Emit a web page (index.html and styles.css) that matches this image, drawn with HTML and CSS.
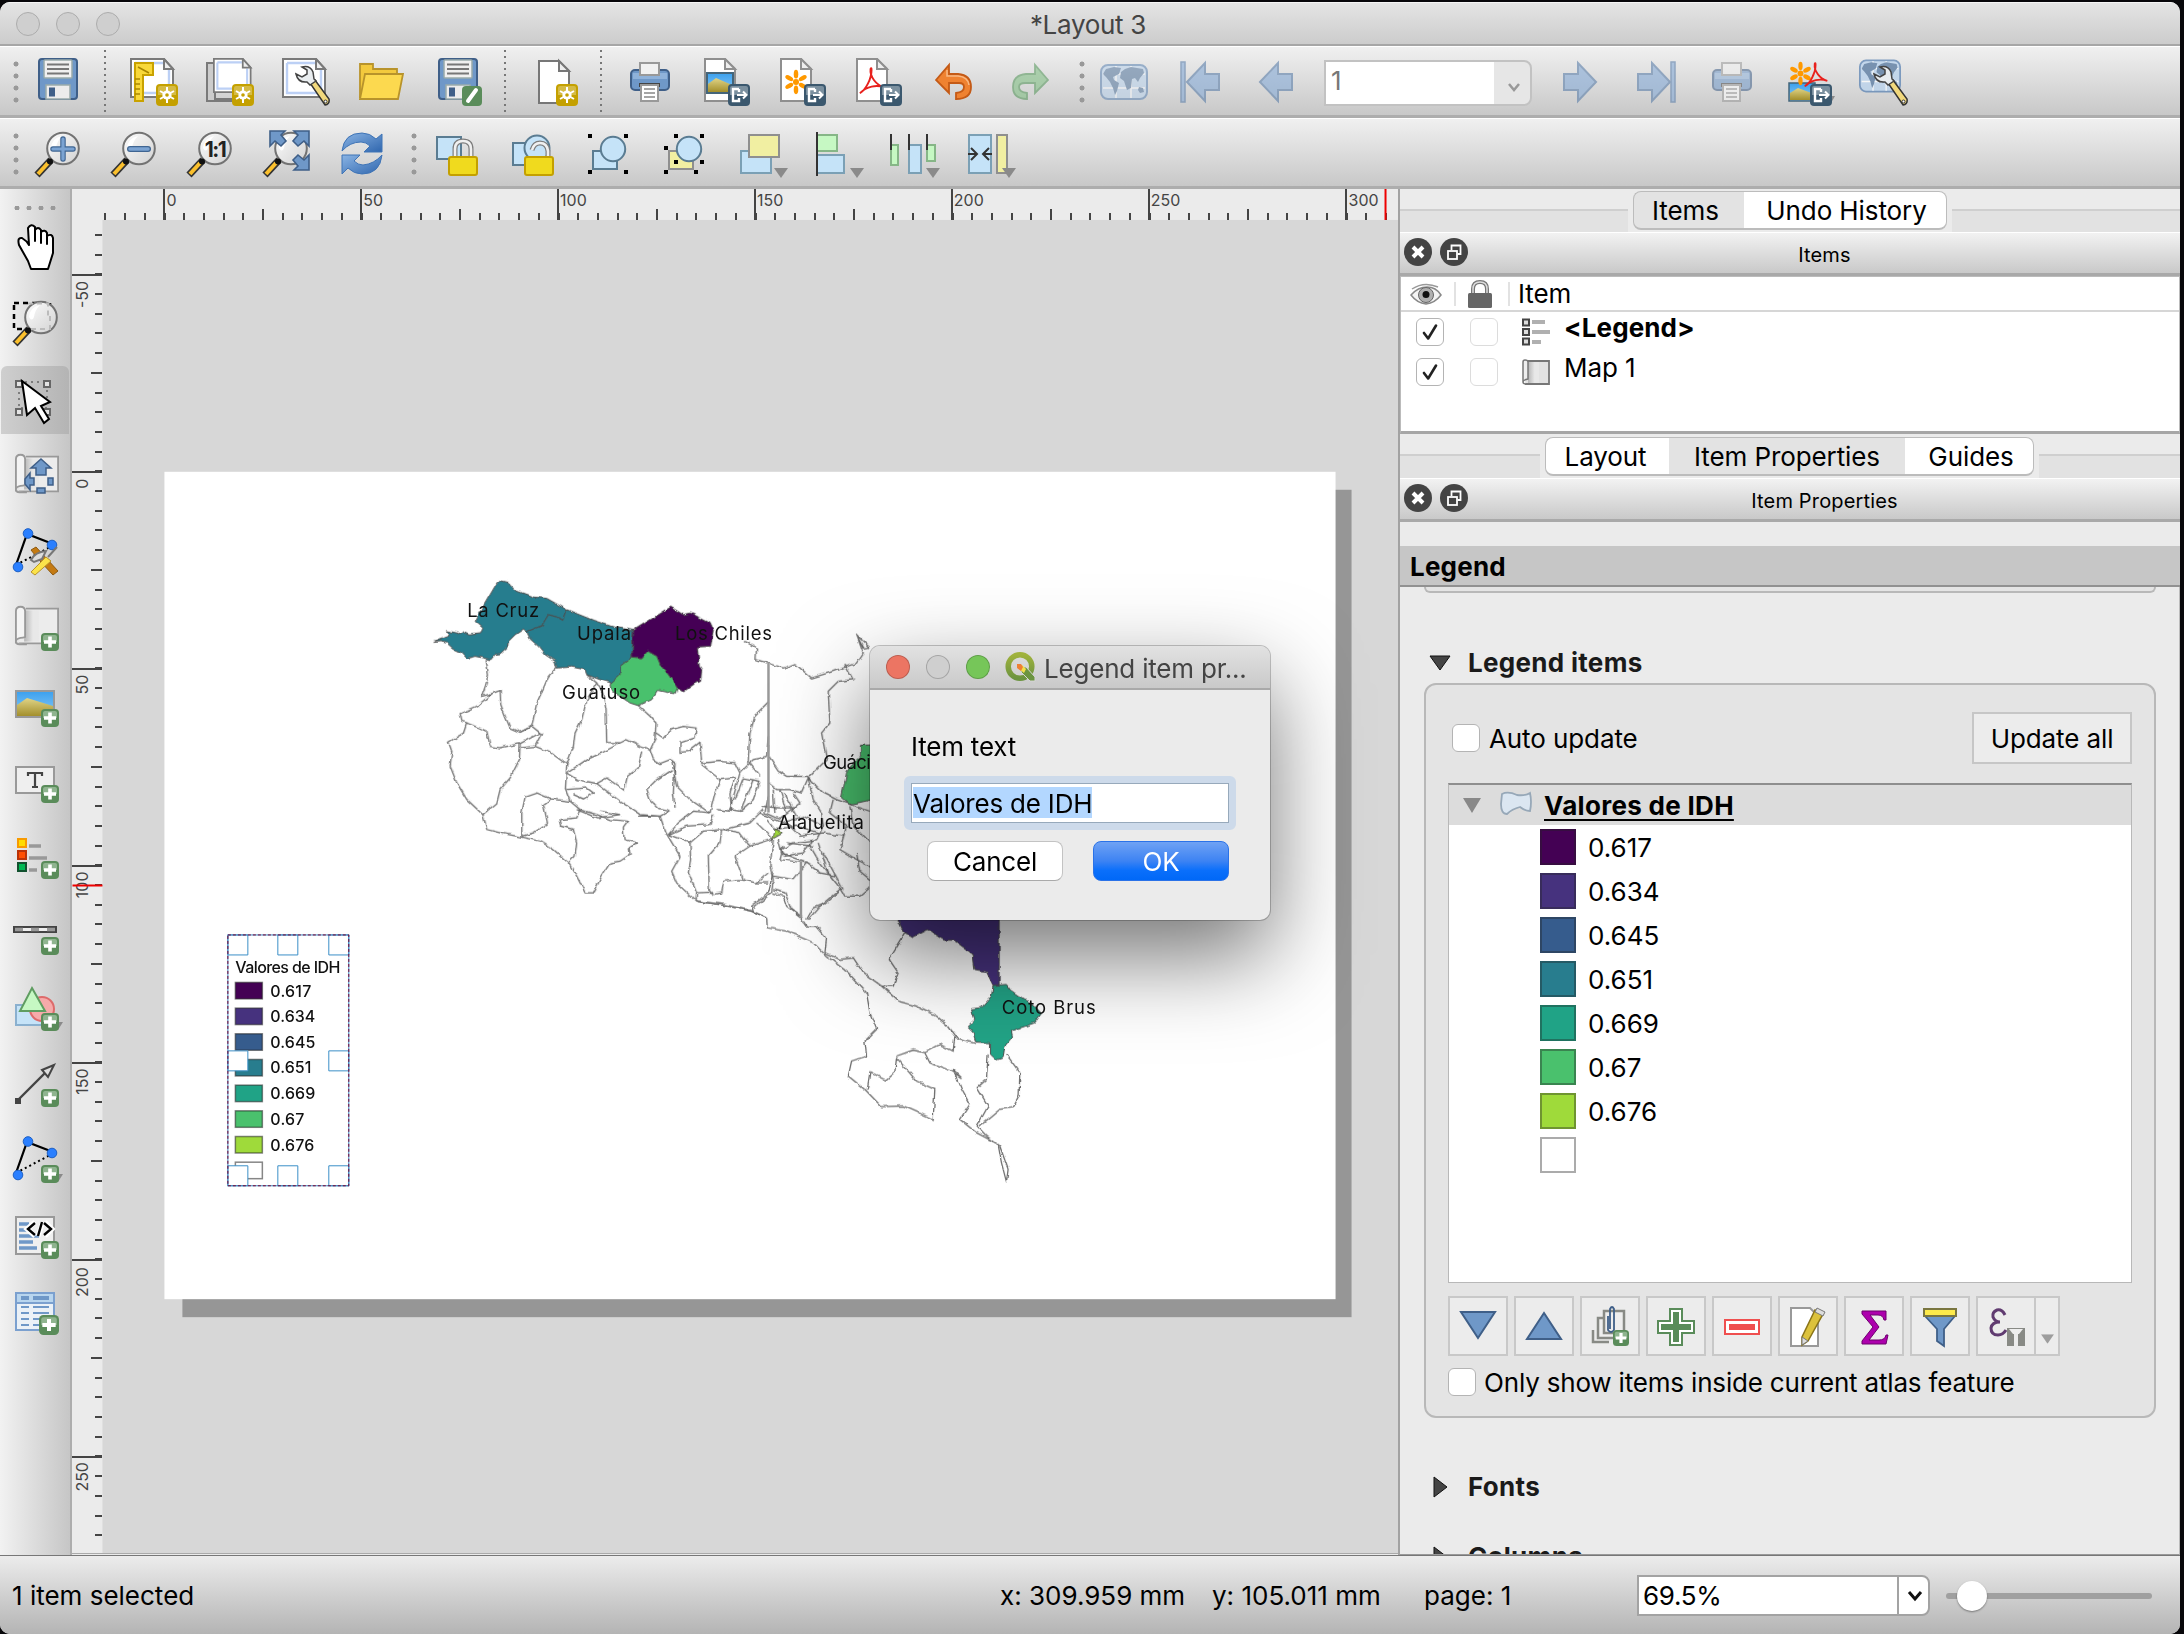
FILE: index.html
```html
<!DOCTYPE html>
<html lang="en">
<head>
<meta charset="utf-8">
<title>*Layout 3</title>
<link rel="stylesheet" href="styles.css">
</head>
<body>
<svg class="defs" width="0" height="0" aria-hidden="true">
  <defs>
    <linearGradient id="sky" x1="0" y1="0" x2="0" y2="1"><stop offset="0" stop-color="#3aa0ee"/><stop offset="1" stop-color="#8fcbf6"/></linearGradient>
    <linearGradient id="sand" x1="0" y1="0" x2="0" y2="1"><stop offset="0" stop-color="#e0d487"/><stop offset="1" stop-color="#a38f2c"/></linearGradient>
    <linearGradient id="roll" x1="0" y1="0" x2="1" y2="0"><stop offset="0" stop-color="#b5b5b5"/><stop offset=".6" stop-color="#e8e8e8"/></linearGradient>
    <linearGradient id="lens" x1="0" y1="0" x2="1" y2="1"><stop offset="0" stop-color="#fdfdfd"/><stop offset="1" stop-color="#d2d2d2"/></linearGradient>
    <linearGradient id="qg" x1="0" y1="0" x2="0" y2="1"><stop offset="0" stop-color="#a0b23c"/><stop offset="1" stop-color="#6c9440"/></linearGradient>
    <linearGradient id="blueArrow" x1="0" y1="0" x2="1" y2="1"><stop offset="0" stop-color="#8ab4e4"/><stop offset="1" stop-color="#2f66ae"/></linearGradient>
  </defs>
  <symbol id="b-plus" viewBox="0 0 18 18"><rect width="18" height="18" rx="4" fill="#5a8c5a"/><path d="M2 4q0-2 2-2h10q2 0 2 2v5H2z" fill="#8fb48f"/><path d="M9 3.500v11M3 9h12" stroke="#fff" stroke-width="3.600"/></symbol>
  <symbol id="b-star" viewBox="0 0 22 22"><rect width="22" height="22" rx="4" fill="#c4a000"/><path d="M2 4q0-2 2-2h14q2 0 2 2v7H2z" fill="#d5bb45"/><path d="M11 3v16M4 7l14 8M18 7L4 15" stroke="#fff" stroke-width="2"/><circle cx="11" cy="11" r="4.600" fill="#fff"/><circle cx="11" cy="11" r="1.800" fill="#c4a000"/></symbol>
  <symbol id="b-export" viewBox="0 0 22 22"><rect width="22" height="22" rx="4" fill="#3b586e"/><path d="M2 4q0-2 2-2h14q2 0 2 2v7H2z" fill="#7b909f"/><path d="M11 5H5v12h6v-3M11 5v3" fill="none" stroke="#fff" stroke-width="2.400"/><path d="M9 11h9M15 7.500l3.500 3.500-3.500 3.500" fill="none" stroke="#fff" stroke-width="2"/></symbol>
  <symbol id="floppy" viewBox="0 0 48 48"><rect x="5" y="1" width="38" height="40" rx="3" fill="#6f98c8" stroke="#3f5f88" stroke-width="2"/><rect x="10" y="2" width="28" height="18" rx="1" fill="#f0f0f0" stroke="#9aa" stroke-width="1.500"/><path d="M13 6.500h22M13 11h22M13 15.500h22" stroke="#777" stroke-width="1.800"/><rect x="12" y="27" width="24" height="14" fill="#ececec" stroke="#9aa" stroke-width="1.500"/><rect x="15" y="29.500" width="6" height="9" fill="#3f5f88"/></symbol>
  <symbol id="sheet" viewBox="0 0 48 48"><path d="M1 1h33l9 10v28H1z" fill="#fff" stroke="#7a7a7a" stroke-width="2"/><path d="M5 5h28M5 5v30h34V12" fill="none" stroke="#bcd0f5" stroke-width="2.400"/><path d="M34 1v10h9z" fill="#eee" stroke="#7a7a7a" stroke-width="2"/></symbol>
  <symbol id="page" viewBox="0 0 48 48"><path d="M3 1h20l10 10v32H3z" fill="#fff" stroke="#8f8f8f" stroke-width="2"/><path d="M23 1v10h10z" fill="#eee" stroke="#8f8f8f" stroke-width="2"/></symbol>
  <symbol id="wrench" viewBox="0 0 48 48"><path d="M28 25l5-3 14 19q1 5-4 6z" fill="#f1d87c" stroke="#333" stroke-width="1.500"/><circle cx="43.500" cy="43.500" r="1.500" fill="#fff" stroke="#333"/><path d="M20 9q8-2 11 5l1 7 2 2-6 4-3-3q-9 1-11-8l6 3 5-3v-4z" fill="#e9edf0" stroke="#444" stroke-width="1.500"/></symbol>
  <symbol id="printer" viewBox="0 0 48 48"><rect x="5" y="12" width="38" height="20" rx="4" fill="#6f98c8" stroke="#3f5f88" stroke-width="2"/><path d="M7 15h34v6H7z" fill="#8fb2da"/><rect x="14" y="5" width="19" height="12" fill="#f1f1f1" stroke="#999" stroke-width="2"/><path d="M13 25h21v4H13z" fill="#444"/><rect x="15" y="27" width="17" height="16" fill="#fff" stroke="#999" stroke-width="2"/><path d="M18 31h11M18 35h11M18 39h11" stroke="#888" stroke-width="1.600"/></symbol>
  <symbol id="pdf" viewBox="0 0 30 30"><path d="M2 27C8 24 14 12 14 3q0-3-1-1c-1 8 6 17 14 19-8-3-18-1-25 6z" fill="none" stroke="#e8211d" stroke-width="2"/></symbol>
  <symbol id="flower" viewBox="0 0 30 30"><g fill="#f90"><circle cx="15" cy="15" r="3.500"/><g id="pt"><ellipse cx="15" cy="6" rx="2.600" ry="5"/><ellipse cx="15" cy="24" rx="2.600" ry="5"/></g><use href="#pt" transform="rotate(60 15 15)"/><use href="#pt" transform="rotate(120 15 15)"/></g></symbol>
  <symbol id="globe" viewBox="0 0 48 48" preserveAspectRatio="none"><rect x="1" y="7" width="46" height="34" rx="7" fill="#b9d3ee" stroke="#5b83b3" stroke-width="2"/><path d="M3 16h42M3 30h42M16 8v32M31 8v32" stroke="#fff" stroke-width="1.500"/><path d="M6 11l8-2 7 1-2 6-6 3 1 3 5 3-2 8-2 4-2-7-3-6-4-5-3-3zM25 11l6-2 12 2 1 4-4 5-2 4-3-4-3 1-1 9-4 2-3-9-4-3 1-6zM39 29l4 1 1 4-4 1-2-3z" fill="#54779f"/></symbol>
  <symbol id="mag" viewBox="0 0 48 48"><path d="M17 30L3 45" stroke="#333" stroke-width="7"/><path d="M14 33L4 44" stroke="#fbc02d" stroke-width="4"/><circle cx="29" cy="18.500" r="15.800" fill="url(#lens)" stroke="#737373" stroke-width="2"/><path d="M17 18q1-10 11-12-5 5-6 12-2 5-5 0z" fill="#fff"/><circle cx="16" cy="31.500" r="3" fill="#111"/></symbol>
  <symbol id="arrowL" viewBox="0 0 48 48"><path d="M8 24L26 5v11h14v16H26v11z" fill="#7ea6d6" stroke="#4f76a5" stroke-width="2"/></symbol>
  <symbol id="maproll" viewBox="0 0 48 48"><path d="M12 5h35v38H4" fill="#ececec" stroke="#999" stroke-width="2"/><rect x="10" y="7" width="16" height="34" fill="url(#roll)"/><path d="M1 43V8q0-5 5-5 5 0 5 5v28q-2 1-5 1-5 1-5 4 0 3 4 3h8" fill="#f4f4f4" stroke="#999" stroke-width="2"/></symbol>
  <symbol id="nodes" viewBox="0 0 48 48"><path d="M5 38L16 7l26 10" fill="none" stroke="#000" stroke-width="2.200"/><path d="M5 38l38-20" stroke="#000" stroke-width="2" stroke-dasharray="2 3"/><g fill="#2a7fff" stroke="#1c5fc4"><circle cx="17" cy="6.500" r="4.800"/><circle cx="41" cy="18" r="4.800"/><circle cx="7" cy="40" r="4.800"/></g></symbol>
  <symbol id="dropdown" viewBox="0 0 14 10"><path d="M0 0h14L7 10z" fill="#8a8a8a"/></symbol>
  <symbol id="check" viewBox="0 0 28 28"><path d="M7.500 15l4.500 6L20.500 7" fill="none" stroke="#222" stroke-width="2.800" stroke-linecap="round" stroke-linejoin="round"/></symbol>
  <symbol id="dockclose" viewBox="0 0 28 28"><circle cx="14" cy="14" r="14" fill="#444"/><path d="M9 9l10 10M19 9L9 19" stroke="#fff" stroke-width="4"/></symbol>
  <symbol id="dockfloat" viewBox="0 0 28 28"><circle cx="14" cy="14" r="14" fill="#444"/><rect x="8" y="13" width="9" height="8" fill="none" stroke="#fff" stroke-width="1.800"/><path d="M11.500 12V7.500h9V16h-3" fill="none" stroke="#fff" stroke-width="1.800"/></symbol>
</svg>

<div class="window">
  <header class="titlebar">
    <div class="lights"><i></i><i></i><i></i></div>
    <h1>*Layout 3</h1>
  </header>

  <div class="toolbar first">
    <span class="grip"></span>
    <svg class="tool" viewBox="0 0 48 48"><use href="#floppy"/></svg>
    <span class="sep"></span>
    <svg class="tool" viewBox="0 0 48 48"><use href="#sheet"/><path d="M5 5h18v12H13v26H5z" fill="#f8d83a" stroke="#c9a200" stroke-width="2"/><path d="M8 9l11 6M5 21h5M5 26h5M5 31h5M5 36h5" stroke="#a98700" stroke-width="1.500"/><use href="#b-star" x="26" y="26" width="22" height="22"/></svg>
    <svg class="tool" viewBox="0 0 48 48"><path d="M1 5h8v36h26v2H1z" fill="#ccc" stroke="#7a7a7a" stroke-width="2"/><use href="#sheet" x="7" width="42" height="42"/><use href="#b-star" x="26" y="26" width="22" height="22"/></svg>
    <svg class="tool" viewBox="0 0 48 48"><use href="#sheet"/><use href="#wrench"/></svg>
    <svg class="tool" viewBox="0 0 48 48"><path d="M2 40V6h13v5h24v9" fill="#f3c93d" stroke="#b8932b" stroke-width="1.800"/><path d="M2 41L7 16h38l-5 25z" fill="#fcd94f" stroke="#b8932b" stroke-width="1.800"/></svg>
    <svg class="tool" viewBox="0 0 48 48"><use href="#floppy"/><rect x="28" y="28" width="20" height="20" rx="4" fill="#5a8c5a"/><path d="M34 43l8-11" stroke="#fff" stroke-width="4" stroke-linecap="round"/></svg>
    <span class="sep"></span>
    <svg class="tool" viewBox="0 0 48 48"><path d="M9 3h20l10 10v32H9z" fill="#fff" stroke="#777" stroke-width="2"/><path d="M29 3v10h10z" fill="#eee" stroke="#777" stroke-width="2"/><use href="#b-star" x="26" y="26" width="22" height="22"/></svg>
    <span class="sep"></span>
    <svg class="tool" viewBox="0 0 48 48"><use href="#printer"/></svg>
    <svg class="tool" viewBox="0 0 48 48"><use href="#page"/><rect x="5" y="15" width="26" height="20" fill="url(#sky)" stroke="#44657a" stroke-width="2"/><path d="M6 26l8-6 16 7v7H6z" fill="url(#sand)"/><use href="#b-export" x="26" y="26" width="22" height="22"/></svg>
    <svg class="tool" viewBox="0 0 48 48"><use href="#page"/><use href="#flower" x="5" y="11" width="26" height="26"/><use href="#b-export" x="26" y="26" width="22" height="22"/></svg>
    <svg class="tool" viewBox="0 0 48 48"><use href="#page"/><use href="#pdf" x="4" y="9" width="29" height="29"/><use href="#b-export" x="26" y="26" width="22" height="22"/></svg>
    <svg class="tool" viewBox="0 0 48 48"><path d="M6 22L19 7v9h9q13 1 13 13 0 12-15 12v-6q8-1 8-6 0-4-5-4H19v10z" fill="#ef8231" stroke="#c45a16" stroke-width="1.800"/><path d="M17 12v6h11q10 1 11 9" fill="none" stroke="#f8b884" stroke-width="1.500"/></svg>
    <svg class="tool faded" viewBox="0 0 48 48"><path d="M42 22L29 7v9h-9Q7 17 7 29q0 12 14 12v-6q-8-1-8-6 0-4 6-4h10v10z" fill="#7dbf80" stroke="#4f9455" stroke-width="1.800"/></svg>
    <span class="grip mid"></span>
    <svg class="tool faded" viewBox="0 0 48 48"><use href="#globe"/></svg>
    <svg class="tool faded" viewBox="0 0 48 48"><path d="M5 4h4v40H5z" fill="#7ea6d6" stroke="#4f76a5" stroke-width="1.500"/><path d="M11 24L29 5v11h14v16H29v11z" fill="#7ea6d6" stroke="#4f76a5" stroke-width="2"/></svg>
    <svg class="tool faded" viewBox="0 0 48 48"><use href="#arrowL"/></svg>
    <div class="pagecombo"><span>1</span><b><svg viewBox="0 0 16 12"><path d="M3 2l5 6 5-6" fill="none" stroke="#999" stroke-width="2.500"/></svg></b></div>
    <svg class="tool faded" viewBox="0 0 48 48"><use href="#arrowL" transform="matrix(-1 0 0 1 48 0)"/></svg>
    <svg class="tool faded" viewBox="0 0 48 48"><path d="M39 4h4v40h-4z" fill="#7ea6d6" stroke="#4f76a5" stroke-width="1.500"/><path d="M38 24L20 5v11H6v16h14v11z" fill="#7ea6d6" stroke="#4f76a5" stroke-width="2"/></svg>
    <svg class="tool faded" viewBox="0 0 48 48"><use href="#printer"/></svg>
    <svg class="tool" viewBox="0 0 48 48"><rect x="5" y="25" width="26" height="18" fill="url(#sky)" stroke="#44657a" stroke-width="1.500"/><path d="M6 35l8-5 16 6v6H6z" fill="url(#sand)"/><use href="#flower" x="4" y="3" width="25" height="25"/><use href="#pdf" x="19" y="4" width="27" height="27"/><path d="M44 38h7l-4 7z" fill="#8a8a8a"/><use href="#b-export" x="26" y="26" width="22" height="22"/></svg>
    <svg class="tool" viewBox="0 0 48 48"><g opacity=".75"><use href="#globe" x="-1" y="-4" width="42" height="44"/></g><use href="#wrench"/></svg>
  </div>

  <div class="toolbar second">
    <span class="grip"></span>
    <svg class="tool" viewBox="0 0 48 48"><use href="#mag"/><path d="M29 9v20M19 19h20" stroke="#3f6592" stroke-width="5.500" stroke-linecap="round"/><path d="M29 9v20M19 19h20" stroke="#7ba3d2" stroke-width="3.200" stroke-linecap="round"/></svg>
    <svg class="tool" viewBox="0 0 48 48"><use href="#mag"/><path d="M20 19h18" stroke="#3f6592" stroke-width="6" stroke-linecap="round"/><path d="M20 19h18" stroke="#7ba3d2" stroke-width="3.500" stroke-linecap="round"/></svg>
    <svg class="tool" viewBox="0 0 48 48"><use href="#mag"/><text x="29" y="26.500" class="one" text-anchor="middle">1:1</text></svg>
    <svg class="tool" viewBox="0 0 48 48"><use href="#mag"/><g fill="#6f98c8" stroke="#3f5f88" stroke-width="1.600"><path d="M8 1h15l-4 4 5 6-5 5-6-5-5 5z"/><path d="M47 1H32l4 4-5 6 5 5 6-5 5 5z"/><path d="M47 40H32l4-4-5-6 5-5 6 5 5-5z"/></g></svg>
    <svg class="tool" viewBox="0 0 48 48"><path d="M4 21Q6 3 24 3q8 0 14 6l6-5v18H26l6-6q-4-4-9-4Q12 12 4 21z" fill="url(#blueArrow)" stroke="#3f74b6"/><path d="M44 25q-2 19-20 19-8 0-14-6l-6 6V25h18l-6 6q4 4 9 4 11-1 19-10z" fill="url(#blueArrow)" stroke="#3f74b6"/></svg>
    <span class="grip mid"></span>
    <svg class="tool" viewBox="0 0 48 48"><rect x="5" y="7" width="24" height="22" fill="#c5e3f8" stroke="#5a7c92" stroke-width="2"/><path d="M23 27V19q0-8 8-8t8 8v8" fill="none" stroke="#7d7d7d" stroke-width="5"/><path d="M23 27V19q0-8 8-8t8 8v8" fill="none" stroke="#f0f0f0" stroke-width="2.600"/><rect x="17" y="27" width="28" height="18" rx="2" fill="#f0da1e" stroke="#c4a000" stroke-width="2"/></svg>
    <svg class="tool" viewBox="0 0 48 48"><rect x="5" y="13" width="20" height="22" fill="#c5e3f8" stroke="#5a7c92" stroke-width="2"/><circle cx="29" cy="18" r="12.500" fill="#c5e3f8" stroke="#5a7c92" stroke-width="2"/><path d="M24 20q2-7 8-7 7 0 8 8v6" fill="none" stroke="#7d7d7d" stroke-width="5"/><path d="M24 20q2-7 8-7 7 0 8 8v6" fill="none" stroke="#f0f0f0" stroke-width="2.600"/><rect x="17" y="27" width="28" height="18" rx="2" fill="#f0da1e" stroke="#c4a000" stroke-width="2"/></svg>
    <svg class="tool" viewBox="0 0 48 48"><rect x="9" y="21" width="24" height="18" fill="#c5e3f8" stroke="#5a7c92" stroke-width="2"/><circle cx="29" cy="19" r="12.200" fill="#c5e3f8" stroke="#5a7c92" stroke-width="2"/><path d="M4 4h4v4H4zM40 4h4v4h-4zM4 40h4v4H4zM40 40h4v4h-4z"/></svg>
    <svg class="tool" viewBox="0 0 48 48"><rect x="9" y="21" width="24" height="18" fill="#f1efa2" stroke="#8f8f8f" stroke-width="2"/><circle cx="29" cy="19" r="12.200" fill="#c5e3f8" stroke="#5a7c92" stroke-width="2"/><path d="M14 4h4v4h-4zM40 4h4v4h-4zM4 16h4v4H4zM14 30h4v4h-4zM40 30h4v4h-4zM4 40h4v4H4zM34 40h4v4h-4z"/></svg>
    <svg class="tool" viewBox="0 0 48 48"><rect x="5" y="21" width="30" height="22" fill="#c5e3f8" stroke="#7ba0b5" stroke-width="2"/><rect x="13" y="5" width="30" height="22" fill="#f1efa2" stroke="#8f8f8f" stroke-width="2"/><use href="#dropdown" x="38" y="38" width="14" height="10"/></svg>
    <svg class="tool" viewBox="0 0 48 48"><rect x="5" y="5" width="20" height="16" fill="#c6f8c3" stroke="#86b687" stroke-width="2"/><rect x="5" y="25" width="27" height="18" fill="#c5e3f8" stroke="#7ba0b5" stroke-width="2"/><path d="M5 2v44" stroke="#333" stroke-width="2"/><use href="#dropdown" x="38" y="38" width="14" height="10"/></svg>
    <svg class="tool" viewBox="0 0 48 48"><g stroke-width="2"><rect x="3" y="15" width="7" height="20" fill="#c6f8c3" stroke="#86b687"/><rect x="21" y="15" width="12" height="28" fill="#c5e3f8" stroke="#7ba0b5"/><rect x="39" y="15" width="8" height="16" fill="#c6f8c3" stroke="#86b687"/><path d="M3 4v16M21 4v16M39 4v16" stroke="#333"/></g><use href="#dropdown" x="38" y="38" width="14" height="10"/></svg>
    <svg class="tool" viewBox="0 0 48 48"><rect x="5" y="5" width="22" height="38" fill="#c5e3f8" stroke="#7ba0b5" stroke-width="2"/><rect x="33" y="5" width="10" height="38" fill="#f1efa2" stroke="#8f8f8f" stroke-width="2"/><path d="M4 24h8M7 18l6 6-6 6M28 24h-8M25 18l-6 6 6 6" fill="none" stroke="#333" stroke-width="2"/><use href="#dropdown" x="38" y="38" width="14" height="10"/></svg>
  </div>

  <main class="main">
    <nav class="toolbox">
      <span class="hgrip"></span>
      <svg class="tool" viewBox="0 0 48 48"><path d="M20 46l-3-8-9-16q-2-8 3-7 5 3 7 7L17 5q3-5 7-1v14V7q3-4 6 0v13V9q4-3 6 1v11-8q5-3 6 2v15l-5 16z" fill="#fff" stroke="#000" stroke-width="2" stroke-linejoin="round"/></svg>
      <svg class="tool" viewBox="0 0 48 48"><rect x="3" y="4" width="36" height="26" fill="none" stroke="#000" stroke-width="2.500" stroke-dasharray="5 4"/><use href="#mag" x="1"/><path d="M17 4.500h20v12M39 17v13H20" fill="none" stroke="#bbb" stroke-width="2" stroke-dasharray="5 4"/></svg>
      <span class="active"><svg class="tool" viewBox="0 0 48 48"><rect x="8" y="7" width="28" height="26" fill="none" stroke="#666" stroke-width="1.500" stroke-dasharray="2 4"/><g fill="#e4e4e4" stroke="#666" stroke-width="2"><path d="M5 6h6v6H5zM33 6h6v6h-6zM5 40h6v-6H5zM33 40h6v-6h-6z"/></g><path d="M11 6l5 34 8-7 9 15 5-4-8-13 9-4z" fill="#fff" stroke="#000" stroke-width="2"/></svg></span>
      <svg class="tool" viewBox="0 0 48 48"><use href="#maproll" x="4" y="1" width="44" height="44"/><g fill="#6f98c8" stroke="#3f5f88" stroke-width="1.500"><path d="M30 8l10 9h-5v7H25v-7h-5z"/><path d="M23 27h-4v-5l-5 6v5l5 6v-5h4z"/><path d="M42 27h-5v7h5zM26 42v-5h8v5z"/></g></svg>
      <svg class="tool" viewBox="0 0 48 48"><use href="#nodes"/><path d="M20 23l5-3 22 24-5 4-13-14z" fill="#c47a12" stroke="#8f5a10"/><path d="M20 45l15-15 5 4-16 14z" fill="#fbe34a" stroke="#b8932b"/><path d="M20 33q4-8 15-9l-4 8-8 3zM37 30l9-10" fill="#ddd" stroke="#777" stroke-width="2"/></svg>
      <svg class="tool" viewBox="0 0 48 48"><use href="#maproll" x="4" y="1" width="44" height="44"/><use href="#b-plus" x="30" y="30" width="18" height="18"/></svg>
      <svg class="tool" viewBox="0 0 48 48"><rect x="5" y="12" width="38" height="26" fill="url(#sky)" stroke="#999" stroke-width="2"/><path d="M6 26l10-7 26 8v10H6z" fill="url(#sand)"/><use href="#b-plus" x="30" y="30" width="18" height="18"/></svg>
      <svg class="tool" viewBox="0 0 48 48"><rect x="5" y="12" width="38" height="26" fill="#efefef" stroke="#999" stroke-width="2"/><path d="M17 21v-3h14v3M24 18v14M21 32h6" fill="none" stroke="#444" stroke-width="2.200"/><use href="#b-plus" x="30" y="30" width="18" height="18"/></svg>
      <svg class="tool" viewBox="0 0 48 48"><g stroke-width="2"><rect x="7" y="8" width="8" height="8" fill="#ffdc00" stroke="#f79a00"/><rect x="7" y="20" width="8" height="8" fill="#ff4e00" stroke="#b93207"/><rect x="7" y="32" width="8" height="8" fill="#00b853" stroke="#12512f"/></g><path d="M18 15h12M18 27h18M18 39h8" stroke="#999" stroke-width="3.500"/><use href="#b-plus" x="30" y="30" width="18" height="18"/></svg>
      <svg class="tool" viewBox="0 0 48 48"><rect x="3" y="20" width="42" height="5" fill="#eee" stroke="#444" stroke-width="2"/><path d="M4 22.500h8M20 22.500h8M36 22.500h8" stroke="#999" stroke-width="3.500"/><use href="#b-plus" x="30" y="30" width="18" height="18"/></svg>
      <svg class="tool" viewBox="0 0 48 48"><rect x="5" y="22" width="26" height="20" fill="#c5e3f8" stroke="#8ab0cf" stroke-width="2"/><circle cx="31" cy="26" r="12" fill="#f6aaaa" stroke="#dd6a6a" stroke-width="2"/><path d="M21 5l13 23H9z" fill="#c6f8c3" stroke="#5f9d61" stroke-width="2"/><path d="M46 39h6l-5 8z" fill="#8a8a8a"/><use href="#b-plus" x="30" y="30" width="18" height="18"/></svg>
      <svg class="tool" viewBox="0 0 48 48"><path d="M7 41L36 12" stroke="#444" stroke-width="2.400"/><path d="M43 6L31 11l6 7z" fill="#ddd" stroke="#444" stroke-width="2"/><path d="M4 39h6v6H4z" fill="#444"/><use href="#b-plus" x="30" y="30" width="18" height="18"/></svg>
      <svg class="tool" viewBox="0 0 48 48"><use href="#nodes"/><path d="M46 39h6l-5 8z" fill="#8a8a8a"/><use href="#b-plus" x="30" y="30" width="18" height="18"/></svg>
      <svg class="tool" viewBox="0 0 48 48"><rect x="5" y="6" width="38" height="37" fill="#efefef" stroke="#999" stroke-width="2"/><path d="M8 13h10M8 19h8M8 25h20M8 31h14M8 37h18" stroke="#6f98c8" stroke-width="3.500"/><path d="M24 11l-8 7 8 7M32 11l-5 14M34 11l7 7-7 7" fill="none" stroke="#fff" stroke-width="5"/><path d="M24 12l-7 6 7 6M31 11l-4 14M33 12l7 6-7 6" fill="none" stroke="#000" stroke-width="2.400"/><use href="#b-plus" x="30" y="30" width="18" height="18"/></svg>
      <svg class="tool" viewBox="0 0 48 48"><rect x="5" y="6" width="38" height="37" fill="#ebf1f7" stroke="#7ba0cf" stroke-width="2"/><path d="M6 7h36v9H6z" fill="#b8d5ee"/><path d="M5 16h38" stroke="#7ba0cf" stroke-width="2"/><path d="M10 11h8M22 11h16" stroke="#6f98c8" stroke-width="4"/><path d="M10 20h8M22 20h16M10 26h8M22 26h16M10 32h8M22 32h16M10 38h8M22 38h16" stroke="#6f98c8" stroke-width="2"/><use href="#b-plus" x="28" y="28" width="20" height="20"/></svg>
    </nav>

    <svg class="canvas" viewBox="72 189 1326 1365" width="1326" height="1365">
      <defs>
        <filter id="coast" x="-5%" y="-5%" width="110%" height="110%"><feTurbulence type="fractalNoise" baseFrequency=".13" numOctaves="2" seed="4"/><feDisplacementMap in="SourceGraphic" scale="4" xChannelSelector="R" yChannelSelector="G"/></filter>
      </defs>
      <rect x="72" y="189" width="1327" height="1365" fill="#ebebeb"/>
      <rect x="102" y="220" width="1297" height="1334" fill="#d7d7d7"/>
      <rect x="182" y="490" width="1170" height="828" fill="#969696"/>
      <rect x="164" y="472" width="1172" height="828" fill="#fff"/>

      <g class="ruler" shape-rendering="crispEdges">
        <path d="M104 216.500H1398" stroke-width="7" stroke-dasharray="2 17.715"/>
        <path d="M261.600 214.500H1398" stroke-width="11" stroke-dasharray="2 195.150"/>
        <path d="M163 204.500H1398" stroke-width="31" stroke-dasharray="2 195.150"/>
        <path d="M98.500 234V1553" stroke-width="7" stroke-dasharray="2 17.715"/>
        <path d="M96.500 372.500V1553" stroke-width="11" stroke-dasharray="2 195.150"/>
        <path d="M87 273.900V1553" stroke-width="30" stroke-dasharray="2 195.150"/>
      </g>
      <g class="ruletext">
        <text x="166" y="206">0</text><text x="363" y="206">50</text><text x="560" y="206">100</text><text x="757" y="206">150</text><text x="954" y="206">200</text><text x="1151" y="206">250</text><text x="1349" y="206">300</text>
        <g text-anchor="end">
          <text transform="translate(88 281) rotate(-90)">-50</text><text transform="translate(88 479) rotate(-90)">0</text><text transform="translate(88 675) rotate(-90)">50</text><text transform="translate(88 872) rotate(-90)">100</text><text transform="translate(88 1069) rotate(-90)">150</text><text transform="translate(88 1268) rotate(-90)">200</text><text transform="translate(88 1463) rotate(-90)">250</text>
        </g>
      </g>
      <path d="M1386 189v31M72 886h30" stroke="#e00" stroke-width="2"/>

      <g class="cantons" filter="url(#coast)">
        <g transform="translate(420 560) scale(.33333)">
          <path d="M198 300L205 345 196 378 185 410 215 402 240 392 242 435 255 470 270 505 300 518 335 500 350 430 368 390 385 350 408 325"/>
          <path d="M215 402L170 440 120 462 125 485 140 490 130 520 85 548 95 575 90 620 110 670 140 720 188 765 200 810 240 820 300 832 360 845 400 870 445 910 470 950 495 1000 520 1000 545 950 570 910 600 905 630 885 628 865 650 850 612 840 610 805 625 785 570 780 530 765 480 750 450 725 392 718 350 700 315 712 305 760 305 830"/>
          <path d="M140 490L200 515 210 560 240 565 300 552 360 520 335 500 300 518M300 552L298 600 270 655 240 690 230 730 188 765M300 565L345 560 390 578 440 615 436 690 450 725M345 560L365 520"/>
          <path d="M440 615L460 560 465 520 485 480 500 420 530 370 500 345M440 640L500 600 545 580 600 550 620 540 660 560 690 572 705 540 708 490 690 470 655 438M530 370L548 400 558 450 560 548 600 550"/>
          <path d="M708 520L730 535 755 510 790 500 828 505 825 535 780 550 780 578 805 575 840 548 845 610 900 605 945 610 960 640 1000 600 1040 590M690 572L700 600 720 612 750 600 765 610 760 700 765 745"/>
          <path d="M440 640L470 660 530 672 560 655 612 692 622 650 655 625 665 575M530 672L600 725 660 765 720 770 745 755 720 750 690 720 680 690 710 660 755 630M436 690L500 685 520 700 490 718 460 705M470 750L530 775 600 765 540 755M655 770L720 770 738 820 780 890 755 935 770 970 828 1025 900 1035 995 1055 1045 1078"/>
          <path d="M480 750L470 775 420 780 425 800 460 810 470 850 465 890 445 910M392 718L370 735 382 790 340 820 305 830"/>
          <path d="M755 600L770 680 810 720 870 760 885 700 900 660 845 615M870 760L820 755 775 790 745 825 800 800 870 795 880 765M745 825L810 850 850 815 910 810 990 790 1030 750"/>
          <path d="M810 850L812 900 805 940 830 1000 828 1025M905 812L900 850 865 890 868 990 880 1005 905 1000 912 965 960 960 1010 970 1045 970M912 810L960 820 990 860 945 890 970 960M990 860L1060 838M1045 940L1010 970M830 1000L880 998"/>
          <path d="M985 605L990 520 1005 470 1045 430M1040 590L1045 530M900 660L945 655 930 700 935 755 890 750M960 640L930 750 960 755 1000 720 1020 665 970 655 945 720M985 605L1020 650M1000 660L965 745"/>
          <path d="M975 245L1010 265 1008 300 1045 310 1090 325 1125 312 1175 355 1240 335 1310 310 1330 280 1310 225 1350 265M1275 315L1300 360 1255 365 1225 395 1230 490 1205 520 1220 600 1170 650 1100 650 1075 635 1045 590M1310 225L1330 265 1350 262"/>
          <path d="M1045 670L1070 690 1110 690 1145 700 1165 655 1210 700 1250 720 1350 755M1045 710L1035 760 1080 780 1140 730 1120 700M1060 690L1065 760M1080 690L1100 760M1165 655L1180 720 1205 760 1210 800M1010 790L1060 838M1020 760L1085 790 1150 770 1210 800 1190 840 1120 850 1085 870 1095 890 1150 880 1180 840"/>
          <path d="M1240 720L1230 760 1280 800 1260 870 1310 900 1350 920M1290 740L1300 800 1350 850M1350 960L1320 935 1310 880M1165 850L1200 910 1260 985 1225 940 1195 850M1270 990L1210 880M1260 985L1275 1010 1320 1010 1350 985M1160 910L1200 940 1250 950M1060 840L1050 920 1060 960 1055 1000 1000 1045M1060 950L1120 960 1160 910 1080 900 1090 860M1060 990L1095 1000 1115 1050 1150 1075M1165 1080L1200 1040 1260 990M1085 880L1150 905M1075 840L1085 880"/>
          <path d="M1090 700L1130 770M1025 740L1075 745 1130 745M1040 780L1065 810 1130 800 1200 820M1100 790L1140 830 1210 820 1270 830M1100 850L1180 860"/>
        </g>
        <g transform="translate(640 740) scale(.33333)">
          <path d="M170 485L250 495 335 515 380 535 382 565 440 575 520 610 560 650 625 700 680 760 690 820 710 870 675 905 680 950 635 965 625 1010 680 1055 725 1102 790 1100 880 1140 885 1050 830 1025 770 955 765 1000 740 1022 690 998 682 1050"/>
          <path d="M400 395L385 460 335 500 340 515M400 460L430 470 440 500 480 530 500 560 530 560 560 595 555 640 600 660 640 655 670 700 725 740 775 785 830 800 890 830 925 860 955 900 1008 912M800 575L748 660 775 700 760 740 725 740M500 540L520 505 560 490 605 450"/>
          <path d="M945 890L940 935 900 915 855 940 820 932 770 950M855 940L870 970 935 995 965 1015 940 990 965 1050 990 1095 960 1140 1010 1180 1075 1215 1085 1270 1100 1328 1105 1290 1080 1220 1040 1190 1012 1160 1045 1100 1012 1045 1040 1020 1045 945M1100 945L1140 1000 1138 1070 1120 1105 1080 1110 1020 1160"/>
        </g>
        <g class="coloured" transform="translate(420 560) scale(.33333)">
          <path class="c651" d="M38 248L90 228 78 213 120 222 128 216 150 226 182 222 188 205 165 185 178 160 198 125 235 62 262 68 285 92 340 112 380 116 440 150 428 182 410 172 385 165 365 198 320 216 310 208 285 225 265 245 262 262 240 282 225 284 212 300 190 295 165 290 140 296 125 280 100 268 80 250 60 246z"/>
          <path class="c651" d="M440 150L520 182 580 202 640 212 636 292 600 320 600 345 575 370 540 360 500 345 495 330 455 322 410 325 405 305 375 285 355 260 330 238 320 216 365 198 385 165 410 172 428 182z"/>
          <path class="c617" d="M640 212L752 142 790 165 812 160 870 190 880 212 872 260 832 262 838 320 845 330 842 365 820 375 790 397 770 385 745 345 722 318 710 290 683 275 665 295 636 292z"/>
          <path class="c670" d="M636 292L665 295 683 275 710 290 722 318 745 345 772 385 765 402 740 398 712 392 695 420 655 438 630 430 600 410 575 395 570 372 600 345 600 320z"/>
          <path class="c670" d="M1380 555L1322 557 1322 590 1290 620 1280 640 1265 715 1290 735 1380 715z"/>
          <path class="c676" d="M1058 838L1066 808 1087 822z"/>
        </g>
        <g class="coloured" transform="translate(640 740) scale(.33333)">
          <path class="c634" d="M765 520L790 575 820 592 862 570 912 602 942 602 1000 645 1005 690 1040 697 1060 738 1078 735 1078 520z"/>
          <path class="c669" d="M1060 738L1100 735 1112 752 1135 768 1180 795 1205 822 1185 850 1115 875 1118 892 1095 920 1090 955 1070 962 1052 945 1052 910 1008 908 1000 880 982 862 1005 840 995 808 1025 805 1055 770z"/>
        </g>
      </g>
      <path d="M768.500 663v150" stroke="#999" stroke-width="2.500"/>
      <path d="M801 862v56" stroke="#999" stroke-width="2.500"/>
      <g class="maplabel">
        <text x="467" y="617.500" textLength="72">La Cruz</text><text x="577" y="640.500" textLength="54">Upala</text><text x="675" y="640.500" textLength="97">Los Chiles</text><text x="562" y="699.500" textLength="78">Guatuso</text><text x="823" y="769.500" textLength="74">Guácimo</text><text x="778" y="829.500" textLength="86">Alajuelita</text><text x="1002" y="1014.500" textLength="94">Coto Brus</text>
      </g>

      <g class="maplegend">
        <text x="235" y="974" textLength="105">Valores de IDH</text>
        <g stroke="#232323" stroke-opacity=".55" stroke-width="1.500">
          <rect x="235" y="983" width="27" height="16.500" fill="#440154"/><rect x="235" y="1008.700" width="27" height="16.500" fill="#46327e"/><rect x="235" y="1034.400" width="27" height="16.500" fill="#365c8d"/><rect x="235" y="1060.100" width="27" height="16.500" fill="#287d8e"/><rect x="235" y="1085.800" width="27" height="16.500" fill="#20a386"/><rect x="235" y="1111.500" width="27" height="16.500" fill="#4ac16d"/><rect x="235" y="1137.200" width="27" height="16.500" fill="#9fda3a"/><rect x="235" y="1162.900" width="27" height="16.500" fill="#fff"/>
        </g>
        <text x="270" y="998" textLength="41">0.617</text><text x="270" y="1022.500" textLength="45">0.634</text><text x="270" y="1048.500" textLength="45">0.645</text><text x="270" y="1074" textLength="41">0.651</text><text x="270" y="1100" textLength="45">0.669</text><text x="270" y="1126" textLength="34">0.67</text><text x="270" y="1152" textLength="44">0.676</text>
      </g>
      <path d="M227.500 935.500h20v20h-20zM277.500 935.500h20v20h-20zM328.500 935.500h20v20h-20zM227.500 1051.500h20v20h-20zM328.500 1051.500h20v20h-20zM227.500 1166.500h20v20h-20zM277.500 1166.500h20v20h-20zM328.500 1166.500h20v20h-20z" fill="#fff" stroke="#3a8fc7"/>
      <rect x="227.500" y="935.500" width="121" height="251" fill="none" stroke="#3a8fc7"/>
      <rect x="227.500" y="935.500" width="121" height="251" fill="none" stroke="#7a0030" stroke-dasharray="3 2"/>
    </svg>

    <aside class="panels">
      <div class="tabs top"><div class="tabset"><span class="on w1">Items</span><span class="w2">Undo History</span></div></div>
      <div class="dock"><svg viewBox="0 0 28 28"><use href="#dockclose"/></svg><svg viewBox="0 0 28 28"><use href="#dockfloat"/></svg><span>Items</span></div>
      <div class="items">
        <div class="head">
          <svg class="eye" viewBox="0 0 32 22"><path d="M1 12Q8 4 17 4t14 8Q25 20 16 21 7 20 1 12z" fill="#f4f4f4" stroke="#888" stroke-width="1.500"/><circle cx="16" cy="12" r="7.500" fill="#b0b0b0" stroke="#666"/><circle cx="16" cy="11.500" r="3.500" fill="#111"/><path d="M2 6Q14-2 28 4" fill="none" stroke="#999" stroke-width="1.500"/></svg>
          <i></i>
          <svg class="lock" viewBox="0 0 24 28"><path d="M5 14V9q0-7 7-7t7 7v5" fill="none" stroke="#777" stroke-width="4"/><path d="M5 14V9q0-7 7-7t7 7v5" fill="none" stroke="#ddd" stroke-width="1.500"/><rect y="13" width="24" height="15" rx="1.500" fill="#666"/></svg>
          <i></i><span>Item</span>
        </div>
        <div class="item"><b class="cb"><svg viewBox="0 0 28 28"><use href="#check"/></svg></b><b class="cb dim"></b><svg class="ic" viewBox="0 0 28 28"><g fill="#ddd" stroke="#444" stroke-width="2"><path d="M1 1.500h6v6H1zM1 11h6v6H1zM1 20.500h6v6H1z"/></g><path d="M10 4h13M10 14h18M10 24h9" stroke="#b0b0b0" stroke-width="4"/></svg><strong>&lt;Legend&gt;</strong></div>
        <div class="item"><b class="cb"><svg viewBox="0 0 28 28"><use href="#check"/></svg></b><b class="cb dim"></b><svg class="ic" viewBox="0 0 28 28"><path d="M5 3h22v23H3" fill="#e2e2e2" stroke="#777" stroke-width="1.800"/><path d="M6 4h11v21H6z" fill="url(#roll)"/><path d="M1 24V4q0-2 2-2 3 0 3 2v17q-5 1-5 3t3 2" fill="#eee" stroke="#777" stroke-width="1.500"/></svg><span>Map 1</span></div>
      </div>
      <div class="tabs low"><div class="tabset"><span class="w3">Layout</span><span class="on w4">Item Properties</span><span class="w5">Guides</span></div></div>
      <div class="dock"><svg viewBox="0 0 28 28"><use href="#dockclose"/></svg><svg viewBox="0 0 28 28"><use href="#dockfloat"/></svg><span>Item Properties</span></div>
      <h2 class="section">Legend</h2>
      <div class="scroll">
        <div class="prevgroup"></div>
        <h3><svg viewBox="0 0 22 22"><path d="M1 4h20L11 18z" fill="#444" stroke="#111"/></svg>Legend items</h3>
        <div class="group">
          <div class="row"><b class="cb"></b><span class="auto">Auto update</span><button class="update">Update all</button></div>
          <div class="tree">
            <div class="layer"><svg class="tri" viewBox="0 0 18 15"><path d="M0 0h18L9 15z" fill="#888"/></svg><svg class="poly" viewBox="0 0 32 24"><path d="M2 3Q8 0 17 4q8 1 13-2 2 9 0 18-5 0-10-4-8 2-13 7Q1 23 1 13z" fill="#dbe6f1" stroke="#97a8b8" stroke-width="1.800"/></svg><u>Valores de IDH</u></div>
            <ul>
              <li><i class="s617"></i>0.617</li>
              <li><i class="s634"></i>0.634</li>
              <li><i class="s645"></i>0.645</li>
              <li><i class="s651"></i>0.651</li>
              <li><i class="s669"></i>0.669</li>
              <li><i class="s670"></i>0.67</li>
              <li><i class="s676"></i>0.676</li>
              <li><i></i></li>
            </ul>
          </div>
          <div class="actions">
            <button><svg viewBox="0 0 44 44"><path d="M5 8h34L22 34z" fill="#6f98c8" stroke="#3f5f88" stroke-width="2"/></svg></button>
            <button><svg viewBox="0 0 44 44"><path d="M5 35h34L22 9z" fill="#6f98c8" stroke="#3f5f88" stroke-width="2"/></svg></button>
            <button><svg viewBox="0 0 44 44"><path d="M5 26v12h16" fill="none" stroke="#888a85" stroke-width="2.500"/><path d="M10 14h18v20H10z" fill="#eee" stroke="#888a85" stroke-width="2.500"/><path d="M16 7h20v22H16z" fill="#eee" stroke="#888a85" stroke-width="2.500"/><path d="M20 12v14q3 4 6 0V5q-2-4-4 0v20" fill="none" stroke="#3f5f88" stroke-width="1.800"/><use href="#b-plus" x="25" y="26" width="16" height="16"/></svg></button>
            <button><svg viewBox="0 0 44 44"><path d="M16 5h12v12h12v12H28v12H16V29H4V17h12z" fill="#fff" stroke="#5a8c5a" stroke-width="2"/><path d="M22 8v30M7 23h30" stroke="#5a8c5a" stroke-width="6"/></svg></button>
            <button><svg viewBox="0 0 44 44"><path d="M5 16h34v14H5z" fill="#fff" stroke="#ef4f4f" stroke-width="2"/><path d="M9 23h26" stroke="#ef4f4f" stroke-width="6"/></svg></button>
            <button><svg viewBox="0 0 44 44"><path d="M5 4h19l8 8v30H5z" fill="#fff" stroke="#999" stroke-width="2"/><path d="M29 6l8 4-15 27-6 4v-8z" fill="#dcc23c" stroke="#8a7418" stroke-width="1.500"/><path d="M31 4l8 4-2 4-8-4zM16 33l6 4-6 4z" fill="#ddd" stroke="#777"/></svg></button>
            <button><svg viewBox="0 0 44 44"><path d="M10 7h24v9h-2q-1-5-6-5h-8l9 12-10 13h10q6 0 7-5h2l-2 9H10v-3l11-14L10 10z" fill="#ad00ad" stroke="#6d006d"/></svg></button>
            <button><svg viewBox="0 0 44 44"><path d="M7 12h30L26 25v17l-7-5V25z" fill="#6f98c8" stroke="#3f5f88" stroke-width="1.800"/><path d="M6 5h32v7H6z" fill="#fdea4a" stroke="#7a7640" stroke-width="2"/></svg></button>
            <div class="split"><button><svg viewBox="0 0 44 44"><path d="M21 11q-3-6-8-5-5 2-4 7 2 5 7 5-8 0-9 6 0 7 7 7 5 0 8-5" fill="none" stroke="#603b70" stroke-width="3"/><path d="M23 24h18v18h-7V30h-4v12h-7z" fill="#888a85"/><path d="M25 25h14l-4 5h-6z" fill="#eee"/></svg></button><button class="more"><svg viewBox="0 0 14 10"><use href="#dropdown"/></svg></button></div>
          </div>
          <div class="row only"><b class="cb"></b><span>Only show items inside current atlas feature</span></div>
        </div>
        <h3 class="fonts"><svg viewBox="0 0 22 22"><path d="M5 1v20l13-10z" fill="#444" stroke="#111"/></svg>Fonts</h3>
        <h3 class="cols"><svg viewBox="0 0 22 22"><path d="M5 1v20l13-10z" fill="#444" stroke="#111"/></svg>Columns</h3>
      </div>
    </aside>
  </main>

  <footer class="status">
    <span class="sel">1 item selected</span>
    <span class="sx">x: 309.959 mm</span>
    <span class="sy">y: 105.011 mm</span>
    <span class="sp">page: 1</span>
    <div class="zoom"><span>69.5%</span><b><svg viewBox="0 0 16 14"><path d="M2 3l6 7 6-7" fill="none" stroke="#111" stroke-width="3"/></svg></b></div>
    <div class="slider"><i></i></div>
  </footer>

  <section class="dialog">
    <header><i class="red"></i><i class="none"></i><i class="green"></i>
      <svg viewBox="0 0 30 30"><circle cx="15" cy="14.500" r="11.800" fill="none" stroke="url(#qg)" stroke-width="5.500"/><path d="M17 15h4l9 10v4h-5l-9-9z" fill="#6c9440" stroke="#d6d6d6" stroke-width="1"/><path d="M13 13h4l4 4-2 4-6-5z" fill="#f3e04a"/><path d="M12 12h4l2 3-2 4-4-3z" fill="#ee8035"/></svg>
      <span>Legend item pr...</span></header>
    <label>Item text</label>
    <div class="field"><span>Valores de IDH</span></div>
    <div class="btns"><button>Cancel</button><button class="ok">OK</button></div>
  </section>
</div>
</body>
</html>
```
FILE: styles.css
```css
* { box-sizing: border-box; }
body {
  margin: 0;
  width: 2184px;
  height: 1634px;
  overflow: hidden;
  background: #08070a;
  font-family: Inter, "Liberation Sans", sans-serif;
  font-size: 26px;
  letter-spacing: -0.1px;
  color: #000;
}
svg { display: block; overflow: visible; flex: none; }
.defs { position: absolute; }
h1, h2, h3, ul { margin: 0; padding: 0; font-size: inherit; list-style: none; }
button { font: inherit; letter-spacing: inherit; color: inherit; padding: 0; margin: 0; display: block; }
i { display: block; }

.window {
  position: relative;
  width: 2180px;
  height: 1632px;
  margin-top: 2px;
  border-radius: 10px;
  overflow: hidden;
  background: #ebebeb;
  display: flex;
  flex-direction: column;
}

/* title bar */
.titlebar {
  height: 44px;
  flex: none;
  display: grid;
  grid-template-columns: 200px 1fr 204px;
  align-items: center;
  background: linear-gradient(#e4e4e4, #cccccc);
  border-top: 1px solid #f5f5f5;
  border-bottom: 2px solid #a6a6a6;
}
.titlebar h1 { font-weight: 400; text-align: center; color: #444; padding-top: 2px; letter-spacing: -.3px; }
.lights { display: flex; gap: 16px; padding-left: 16px; }
.lights i { width: 24px; height: 24px; border-radius: 50%; border: 1px solid #acacac; background: #cfcfcf; }

/* toolbars */
.toolbar {
  flex: none;
  display: flex;
  background: linear-gradient(#f0f0f0, #c8c8c8);
  border-top: 1px solid #fff;
  border-bottom: 3px solid #adadad;
}
.first { height: 72px; padding-top: 11px; }
.second { height: 71px; padding-top: 11px; }
.tool { width: 48px; height: 48px; }
.toolbar .tool + .tool { margin-left: 28px; }
.faded { opacity: .55; }
.grip { width: 34px; height: 48px; background: radial-gradient(circle at 16px 6px, #999 2.2px, transparent 2.8px) 0 0 / 34px 12px repeat-y; }
.grip.mid { width: 46px; background: radial-gradient(circle at 28px 6px, #999 2.2px, transparent 2.8px) 0 0 / 46px 12px repeat-y; }
.sep { width: 48px; height: 62px; margin-top: -8px; background: repeating-linear-gradient(#777 0 2px, transparent 2px 6px) 22px 0 / 2px 100% no-repeat; }
.pagecombo {
  width: 208px; height: 46px; margin: 2px 24px 0;
  display: flex; border: 2px solid #c2c2c2; border-radius: 0 8px 8px 0; color: #777; background: #e6e6e6;
}
.pagecombo span { width: 168px; background: #fff; padding-left: 5px; line-height: 37px; }
.pagecombo b { padding: 20px 0 0 12px; }
.pagecombo b svg { width: 16px; height: 12px; }
.one { font: 700 21px Inter, sans-serif; letter-spacing: -1.5px; fill: #222; }

/* main row */
.main { height: 1366px; flex: none; display: flex; }
.toolbox {
  width: 72px; flex: none;
  display: flex; flex-direction: column; align-items: center; gap: 28px;
  padding-top: 17px;
  background: linear-gradient(90deg, #f2f2f2, #c6c6c6);
  border-right: 2px solid #adadad;
}
.hgrip { width: 48px; height: 4px; margin-bottom: -15px; background: radial-gradient(circle at 6px 2px, #999 2.2px, transparent 2.8px) 0 0 / 12px 4px repeat-x; }
.active { width: 68px; height: 68px; margin: -9px 0 -11px; padding: 9px 10px; background: linear-gradient(90deg, #cfcfcf, #b4b4b4); border-radius: 6px 6px 0 0; }
.canvas { border-bottom: 1px solid #aaa; overflow: hidden; }
.ruler path { stroke: #444; fill: none; }
.ruletext text { font: 16px Inter, sans-serif; letter-spacing: 0; fill: #444; }
.cantons path { fill: none; stroke: #686868; stroke-width: 3.8; }
.coloured path { stroke: #4a4a4a; stroke-width: 3; }
.coloured .c617 { fill: #440154; }
.coloured .c634 { fill: #46327e; }
.coloured .c651 { fill: #287d8e; }
.coloured .c669 { fill: #20a386; }
.coloured .c670 { fill: #4ac16d; }
.coloured .c676 { fill: #9fda3a; }
.maplabel text { font: 18.5px Inter, sans-serif; fill: #111; letter-spacing: 0; }
.maplegend text { font: 500 16px Inter, sans-serif; letter-spacing: 0; fill: #111; }

/* right-hand panels */
.panels { flex: 1; min-width: 0; display: flex; flex-direction: column; border-left: 2px solid #a2a2a2; }
.tabs {
  flex: none; display: flex; justify-content: center; padding-right: 1px;
  background: linear-gradient(#ebebeb 20px, #cfcfcf 20px 22px, #e2e2e2 22px);
}
.tabs.top { height: 43px; padding-top: 2px; }
.tabs.low { height: 44px; padding-top: 3px; }
.tabset { display: flex; height: 41px; border: 0 solid #ebebeb; border-width: 0 5px; background: #ebebeb; }
.tabset span { display: flex; align-items: center; justify-content: center; background: #fff; height: 39px; border: 1px solid #bcbcbc; border-width: 1px 0 2px; }
.tabset span:first-child { border-radius: 8px 0 0 8px; border-left-width: 1px; }
.tabset span:last-child { border-radius: 0 8px 8px 0; border-right-width: 1px; }
.tabset span.on { background: #e3e3e3; }
.w1 { width: 111px; padding-right: 6px; } .w2 { width: 203px; padding-left: 4px; } .w3 { width: 124px; padding-right: 4px; } .w4 { width: 236px; } .w5 { width: 129px; padding-left: 4px; }
.dock {
  height: 44px; flex: none; display: grid; grid-template-columns: 28px 28px 1fr; column-gap: 8px; align-items: center;
  padding: 0 1px 0 4px;
  background: linear-gradient(#f2f2f2, #c9c9c9); border-bottom: 3px solid #a9a9a9; border-top: 1px solid #fff;
  font-size: 20px; letter-spacing: .15px;
}
.dock svg { width: 28px; height: 28px; margin-top: -2px; }
.dock span { padding: 3px 6px 0 0; text-align: center; }
.items { height: 158px; flex: none; background: #fff; border: 1px solid #bbb; border-bottom: 3px solid #a6a6a6; }
.head { height: 35px; display: flex; align-items: center; border-bottom: 2px solid #d6d6d6; padding: 0 0 0 9px; }
.head i { width: 2px; height: 24px; background: #e2e2e2; }
.head span { padding-left: 8px; }
.eye { width: 32px; height: 22px; margin-right: 12px; }
.lock { width: 24px; height: 28px; margin: 0 16px 0 12px; }
.item { height: 40px; display: flex; align-items: center; padding: 0 0 0 15px; }
.cb { display: block; flex: none; width: 28px; height: 28px; background: #fff; border: 1px solid #b4b4b4; border-radius: 6px; }
.cb svg { width: 26px; height: 26px; }
.cb.dim { margin: 0 24px 0 26px; border-color: #dcdcdc; }
.ic { width: 28px; height: 28px; margin-right: 14px; }
.item span, .item strong { margin-top: -9px; }
.item strong { letter-spacing: .1px; }

.section { height: 41px; flex: none; margin-top: 24px; background: #c6c6c6; border-bottom: 2px solid #919191; padding-left: 10px; line-height: 41px; letter-spacing: .2px; }
.scroll { flex: 1; min-height: 0; overflow: hidden; padding: 0 23px 0 24px; border-right: 1px solid #bbb; border-bottom: 1px solid #999; }
.prevgroup { height: 6px; border: 2px solid #b8b8b8; border-top: 0; border-radius: 0 0 10px 10px; background: #e4e4e4; }
.scroll h3 { height: 32px; line-height: 32px; display: flex; align-items: center; color: #1a1a1a; padding-left: 5px; letter-spacing: .3px; }
.scroll h3 svg { width: 22px; height: 22px; margin-right: 17px; }
.scroll h3:nth-of-type(1) { margin-top: 54px; }
.group { margin-top: 4px; height: 735px; border: 2px solid #b8b8b8; border-radius: 12px; background: #e4e4e4; padding: 27px 22px 0; }
.row { display: flex; align-items: center; height: 52px; }
.row .cb { margin-left: 4px; }
.auto { flex: 1; padding-left: 9px; }
.update { width: 160px; height: 52px; border: 2px solid #c6c6c6; background: #ececec; margin-right: 0; }
.tree { margin-top: 19px; width: 684px; height: 500px; background: #fff; border: 1px solid #b8b8b8; border-top: 2px solid #8e8e8e; }
.layer { height: 40px; background: #dcdcdc; display: flex; align-items: center; padding-left: 14px; font-weight: 700; }
.layer u { text-underline-offset: 4px; text-decoration-thickness: 2px; letter-spacing: .3px; text-decoration-skip-ink: none; }
.tri { width: 18px; height: 15px; margin: 0 19px 0 0; }
.poly { width: 32px; height: 24px; margin-right: 12px; margin-top: -4px; }
.tree li { height: 44px; display: flex; align-items: center; padding-left: 91px; letter-spacing: 0; }
.tree li i { width: 36px; height: 36px; margin-right: 12px; border: 2px solid rgba(35, 35, 35, .38); }
.s617 { background: #440154; }
.s634 { background: #46327e; }
.s645 { background: #365c8d; }
.s651 { background: #287d8e; }
.s669 { background: #20a386; }
.s670 { background: #4ac16d; }
.s676 { background: #9fda3a; }
.actions { display: flex; gap: 6px; margin-top: 13px; }
.actions button { width: 60px; height: 60px; border: 2px solid #c8c8c8; background: #ececec; padding: 6px; }
.actions svg { width: 44px; height: 44px; }
.split { display: flex; }
.actions .more { width: 26px; margin-left: -2px; padding: 26px 0 0 5px; }
.split .more svg { width: 13px; height: 10px; opacity: .8; }
.only .cb { margin-left: 0; }
.only span { padding-left: 8px; letter-spacing: -.18px; }
.scroll h3.fonts { margin-top: 53px; }
.scroll h3.cols { margin-top: 38px; }

/* status bar */
.status {
  flex: 1; display: flex; align-items: center; padding-top: 1px;
  background: linear-gradient(#ececec, #b4b4b4); border-top: 1px solid #777; white-space: nowrap; letter-spacing: 0;
}
.status .sel { width: 988px; margin-left: 12px; }
.sx { width: 212px; } .sy { width: 212px; } .sp { width: 213px; }
.zoom { width: 293px; height: 41px; display: flex; border: 2px solid #a3a3a3; background: #fff; border-radius: 0 8px 8px 0; }
.zoom span { width: 260px; padding-left: 4px; line-height: 37px; border-right: 2px solid #a3a3a3; letter-spacing: -.3px; }
.zoom b { padding: 12px 0 0 8px; }
.zoom svg { width: 16px; height: 14px; }
.slider { width: 206px; height: 6px; border-radius: 3px; background: #a0a0a0; margin-left: 16px; display: flex; align-items: center; }
.slider i { width: 30px; height: 30px; border-radius: 50%; background: #fff; margin-left: 11px; box-shadow: 0 1px 2px rgba(0, 0, 0, .4); }

/* modal */
.dialog {
  position: absolute; left: 870px; top: 644px; width: 400px; height: 274px;
  border-radius: 10px; background: #ebebeb; letter-spacing: -.2px;
  box-shadow: 0 0 0 1px rgba(0, 0, 0, .22), 0 36px 90px rgba(0, 0, 0, .55);
}
.dialog header {
  height: 44px; display: flex; align-items: center; padding-left: 16px; white-space: nowrap;
  border-radius: 10px 10px 0 0; background: linear-gradient(#e2e2e2, #c9c9c9); border-bottom: 2px solid #a9a9a9; color: #444;
}
.dialog header span { padding-top: 2px; }
.dialog header i { width: 24px; height: 24px; border-radius: 50%; border: 1px solid rgba(0, 0, 0, .2); margin-right: 16px; }
.red { background: #ec7563; } .none { background: #cfcfcf; } .green { background: #76c659; }
.dialog header svg { width: 30px; height: 30px; margin: 0 9px 0 -1px; }
.dialog label { display: block; height: 40px; line-height: 40px; margin: 37px 0 0 41px; }
.field {
  display: flex; width: 332px; height: 54px; margin: 9px 0 0 34px;
  border: 7px solid #cddaea; border-radius: 6px; background: #fff;
  outline: 1px solid #97a9bb; outline-offset: -8px;
}
.field span { flex: none; height: 31px; line-height: 33px; background: #b3d7ff; margin: 4px 0 0 2px; }
.btns { display: flex; gap: 30px; margin: 11px 0 0 57px; }
.btns button { width: 136px; height: 40px; border: 1px solid #c3c3c3; border-bottom-color: #aaa; border-radius: 8px; background: #fff; }
.btns .ok { color: #fff; border-color: #2a72e8; background: linear-gradient(#6fa2f4, #3d83f3 50%, #0a6ffb 75%, #0068f7); }
```
